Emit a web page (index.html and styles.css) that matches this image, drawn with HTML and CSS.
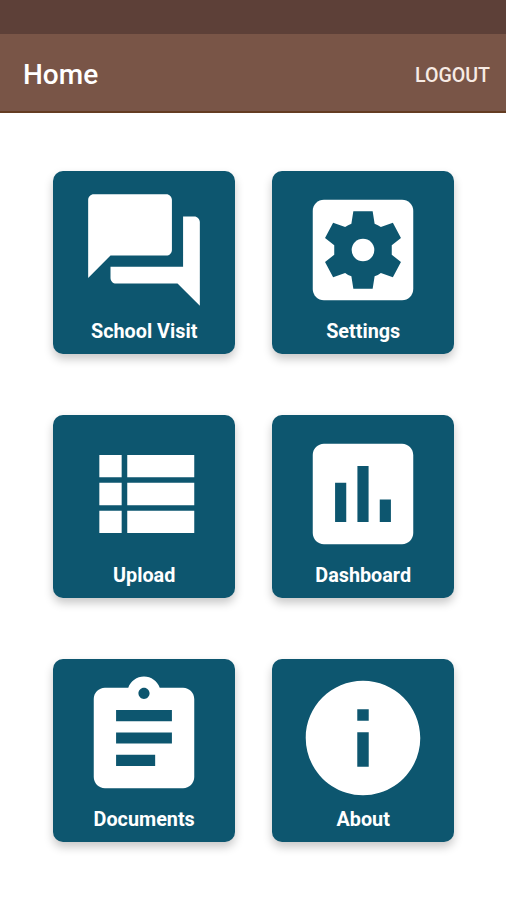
FILE: index.html
```
<!DOCTYPE html>
<html lang="en">
<head>
  <meta charset="UTF-8" />
  <meta name="viewport" content="width=device-width, initial-scale=1.0" />
  <title>Home</title>
  <link rel="stylesheet" href="styles.css">
</head>
<body>
  <div class="status-bar"></div>
  <header class="app-bar">
    <h1>Home</h1>
    <button class="logout">LOGOUT</button>
  </header>

  <main class="menu">
    <a class="tile">
      <svg class="icon" viewBox="0 0 24 24"><path d="M21 6h-2v9H6v2c0 .55.45 1 1 1h11l4 4V7c0-.55-.45-1-1-1zm-4 6V3c0-.55-.45-1-1-1H3c-.55 0-1 .45-1 1v14l4-4h10c.55 0 1-.45 1-1z"/></svg>
      <span class="label">School Visit</span>
    </a>
    <a class="tile">
      <svg class="icon" viewBox="0 0 24 24">
        <rect x="3" y="3" width="18" height="18" rx="2"/>
        <path class="cut" d="M10.27 5.05h3.46l.35 2.25q.6.22 1.12.6l2.15-.8 1.45 2.75-1.65 1.32v1.66l1.65 1.32-1.45 2.75-2.15-.8q-.52.38-1.12.6l-.35 2.25h-3.46l-.35-2.25q-.6-.22-1.12-.6l-2.15.8-1.45-2.75 1.65-1.32v-1.66L5.2 9.85 6.65 7.1l2.15.8q.52-.38 1.12-.6z"/>
        <circle cx="12" cy="12" r="2.03"/>
      </svg>
      <span class="label">Settings</span>
    </a>
    <a class="tile">
      <svg class="icon" viewBox="0 0 24 24"><path d="M4 14h4v-4H4v4zm0 5h4v-4H4v4zM4 9h4V5H4v4zm5 5h12v-4H9v4zm0 5h12v-4H9v4zM9 5v4h12V5H9z"/></svg>
      <span class="label">Upload</span>
    </a>
    <a class="tile">
      <svg class="icon" viewBox="0 0 24 24"><path d="M19 3H5c-1.1 0-2 .9-2 2v14c0 1.1.9 2 2 2h14c1.1 0 2-.9 2-2V5c0-1.1-.9-2-2-2zM9 17H7v-7h2v7zm4 0h-2V7h2v10zm4 0h-2v-4h2v4z"/></svg>
      <span class="label">Dashboard</span>
    </a>
    <a class="tile">
      <svg class="icon" viewBox="0 0 24 24"><path d="M19 3h-4.18C14.4 1.84 13.3 1 12 1c-1.3 0-2.4.84-2.82 2H5c-1.1 0-2 .9-2 2v14c0 1.1.9 2 2 2h14c1.1 0 2-.9 2-2V5c0-1.1-.9-2-2-2zm-7 0c.55 0 1 .45 1 1s-.45 1-1 1-1-.45-1-1 .45-1 1-1zm2 14H7v-2h7v2zm3-4H7v-2h10v2zm0-4H7V7h10v2z"/></svg>
      <span class="label">Documents</span>
    </a>
    <a class="tile">
      <svg class="icon" viewBox="0.3 0.3 23.4 23.4"><path d="M12 2C6.48 2 2 6.48 2 12s4.48 10 10 10 10-4.48 10-10S17.52 2 12 2zm1 15h-2v-6h2v6zm0-8h-2V7h2v2z"/></svg>
      <span class="label">About</span>
    </a>
  </main>
</body>
</html>
```
FILE: styles.css
```
:root {
  --tile: #0d566f;
}

* {
  box-sizing: border-box;
}

body {
  margin: 0;
  min-height: 900px;
  background: #fff;
  color: #fff;
  font-family: Roboto, sans-serif;
}

.status-bar {
  height: 34px;
  background: #5d4038;
}

.app-bar {
  display: flex;
  align-items: center;
  justify-content: space-between;
  height: 79px;
  padding: 4px 16px 0 23px;
  background: #795547;
  border-bottom: 2px solid #643c22;
}

.app-bar h1 {
  margin: 0;
  font-size: 28px;
  font-weight: 500;
}

.logout {
  padding: 1px 0 0;
  border: none;
  background: none;
  color: #f7ebe4;
  font-family: inherit;
  font-size: 19.6px;
  font-weight: 500;
}

.menu {
  display: grid;
  grid-template-columns: 182px 182px;
  gap: 61.7px 37px;
  justify-content: center;
  padding: 58.4px 0 0 1.4px;
}

.tile {
  display: flex;
  flex-direction: column;
  align-items: center;
  height: 182.3px;
  padding-top: 12px;
  border-radius: 10px;
  background: var(--tile);
  box-shadow: 0 5px 10px rgba(0, 0, 0, 0.22);
}

.icon {
  width: 134px;
  height: 134px;
  fill: #fff;
}

.icon .cut {
  fill: var(--tile);
}

.label {
  margin-top: 3px;
  font-size: 19.8px;
  font-weight: 700;
  line-height: 24px;
}
```
